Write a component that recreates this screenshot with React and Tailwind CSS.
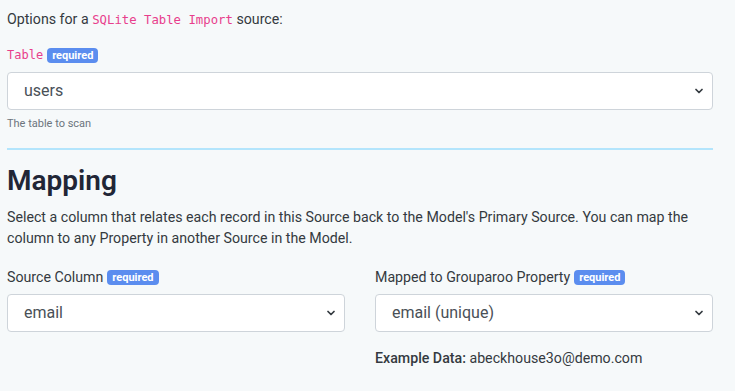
import { ChevronDown } from 'lucide-react';

const font = { fontFamily: 'Roboto, "Noto Sans", sans-serif' };
const mono = { fontFamily: '"DejaVu Sans Mono", "Liberation Mono", monospace' };

const Required = () => (
  <span className="ml-1 inline-block rounded-[4px] bg-[#5b8def] px-[5px] py-[1px] text-[11px] font-bold leading-[13px] text-white" style={font}>
    required
  </span>
);

const Select = ({ value }) => (
  <div className="relative">
    <select
      defaultValue={value}
      className="h-[38px] w-full appearance-none rounded-[4px] border border-[#ced4da] bg-white pl-4 pr-8 text-[16px] text-[#495057] outline-none"
      style={font}
    >
      <option>{value}</option>
    </select>
    <ChevronDown className="pointer-events-none absolute right-[8px] top-[13px] h-3 w-3 text-[#343a40]" strokeWidth={3.5} />
  </div>
);

const App = () => {
  return (
    <div className="min-h-[391px] bg-[#f6f9fa] pl-[7px] pr-[22px] text-[#343a40]" style={font}>
      <p className="pt-[9px] text-[14.2px] leading-[21px]">
        Options for a{' '}
        <code className="text-[12.3px] text-[#e83e8c]" style={mono}>SQLite Table Import</code>{' '}
        source:
      </p>

      <div className="mt-[14px]">
        <label className="flex items-center text-[12px] leading-[20px] text-[#e83e8c]">
          <span style={mono}>Table</span>
          <Required />
        </label>
        <div className="mt-[7px]">
          <Select value="users" />
        </div>
        <p className="mt-[6px] text-[11px] leading-[16px] text-[#6c757d]">The table to scan</p>
      </div>

      <hr className="mt-[16px] border-t-2 border-[#b3e5fc]" />

      <h1 className="mt-[14px] text-[28px] font-semibold leading-[34px] text-[#212636]">Mapping</h1>
      <p className="mt-[9px] text-[14.2px] leading-[21px] text-[#343a40]">
        Select a column that relates each record in this Source back to the Model's Primary Source. You can map the column to any Property in another Source in the Model.
      </p>

      <div className="mt-[18px] grid grid-cols-2 gap-[30px]">
        <div>
          <label className="flex items-center text-[14.2px] leading-[20px]">
            Source Column <Required />
          </label>
          <div className="mt-[7px]">
            <Select value="email" />
          </div>
        </div>
        <div>
          <label className="flex items-center text-[14.2px] leading-[20px]">
            Mapped to Grouparoo Property <Required />
          </label>
          <div className="mt-[7px]">
            <Select value="email (unique)" />
          </div>
          <p className="mt-[16px] text-[14.2px] leading-[20px]">
            <span className="font-medium">Example Data:</span> abeckhouse3o@demo.com
          </p>
        </div>
      </div>
    </div>
  );
};

export default App;
